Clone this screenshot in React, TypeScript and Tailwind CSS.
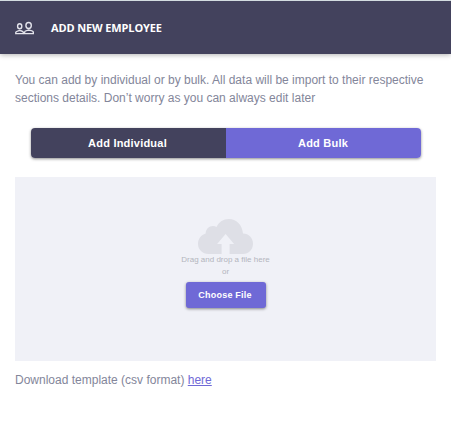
function PeopleIcon() {
  return (
    <svg width="20" height="14" viewBox="0 0 20 14" fill="none" stroke="#e4e4ec" strokeWidth="1.4" className="shrink-0">
      <ellipse cx="4.7" cy="5.3" rx="2.1" ry="2.5" />
      <ellipse cx="13.6" cy="4.5" rx="2.7" ry="3" />
      <path d="M.8 12.6V11.3C.8 10.1 3 10 4.7 9.4C6.5 10 8.3 10.1 8.3 11.3V12.6Z" />
      <path d="M9.6 12.6V11.1C9.6 9.8 12 9.6 13.7 9C15.6 9.6 18.3 9.8 18.3 11.1V12.6Z" />
    </svg>
  );
}

function CloudUpload() {
  return (
    <svg width="56" height="35" viewBox="0 0 56 35" className="block">
      <path
        fill="#dedfe6"
        d="M10.5 35C4.5 35 0 30.5 0 25C0 19.8 3.2 16 7.6 14.6C7.8 10 11 7 15 7C16.3 7 17.5 7.3 18.5 7.9C21 3 25.4 0 30.8 0C38.3 0 44.2 5.7 45 14.6C50.8 14.8 55 19 55 24.8C55 30.5 50.8 35 45 35H31.6V25H36.1L27.6 15L19.1 25H23.6V35Z"
      />
    </svg>
  );
}

export default function App() {
  return (
    <div className="h-[443px] w-full overflow-hidden bg-white font-['Liberation_Sans',Arial,sans-serif] text-[12px] text-[#83869a]">
      <header className="flex h-[54px] items-center border-t border-[#d3dce0] bg-[#43425d] pl-[15px] shadow-[0_1px_5px_rgba(0,0,0,0.3)]">
        <PeopleIcon />
        <h1 className="ml-4 whitespace-nowrap pt-px font-['Open_Sans','Noto_Sans',sans-serif] text-[11px] font-bold tracking-[-0.13px] text-white">
          ADD NEW EMPLOYEE
        </h1>
      </header>
      <main className="px-[15px] pt-[17px]">
        <p className="whitespace-nowrap leading-[18px]">
          You can add by individual or by bulk. All data will be import to their respective
          <br />
          sections details. Don’t worry as you can always edit later
        </p>
        <div className="ml-4 mt-[21px] flex h-[30px] w-[390px] overflow-hidden rounded-[4px] text-[11px] font-bold tracking-[0.22px] text-white shadow-[0_1px_3px_rgba(0,0,0,0.45)]">
          <button className="w-[195px] bg-[#43425d] pr-[2px]">Add Individual</button>
          <button className="flex-1 bg-[#6f69d6] pr-px">Add Bulk</button>
        </div>
        <section className="mt-[19px] flex h-[184px] flex-col items-center bg-[#f0f1f7] pt-[42px]">
          <CloudUpload />
          <p className="text-center text-[8px] leading-[12px] text-[#b3b5bd]">
            Drag and drop a file here
            <br />
            or
          </p>
          <button className="mt-1 h-[26px] w-20 rounded-[3px] bg-[#6f69d6] pr-px pt-px text-[9px] font-bold tracking-[0.22px] text-white shadow-[0_1px_3px_rgba(0,0,0,0.45)]">
            Choose File
          </button>
        </section>
        <p className="mt-[10px] leading-[18px]">
          Download template (csv format){" "}
          <a href="#" className="text-[#6f69d6] underline">here</a>
        </p>
      </main>
    </div>
  );
}
